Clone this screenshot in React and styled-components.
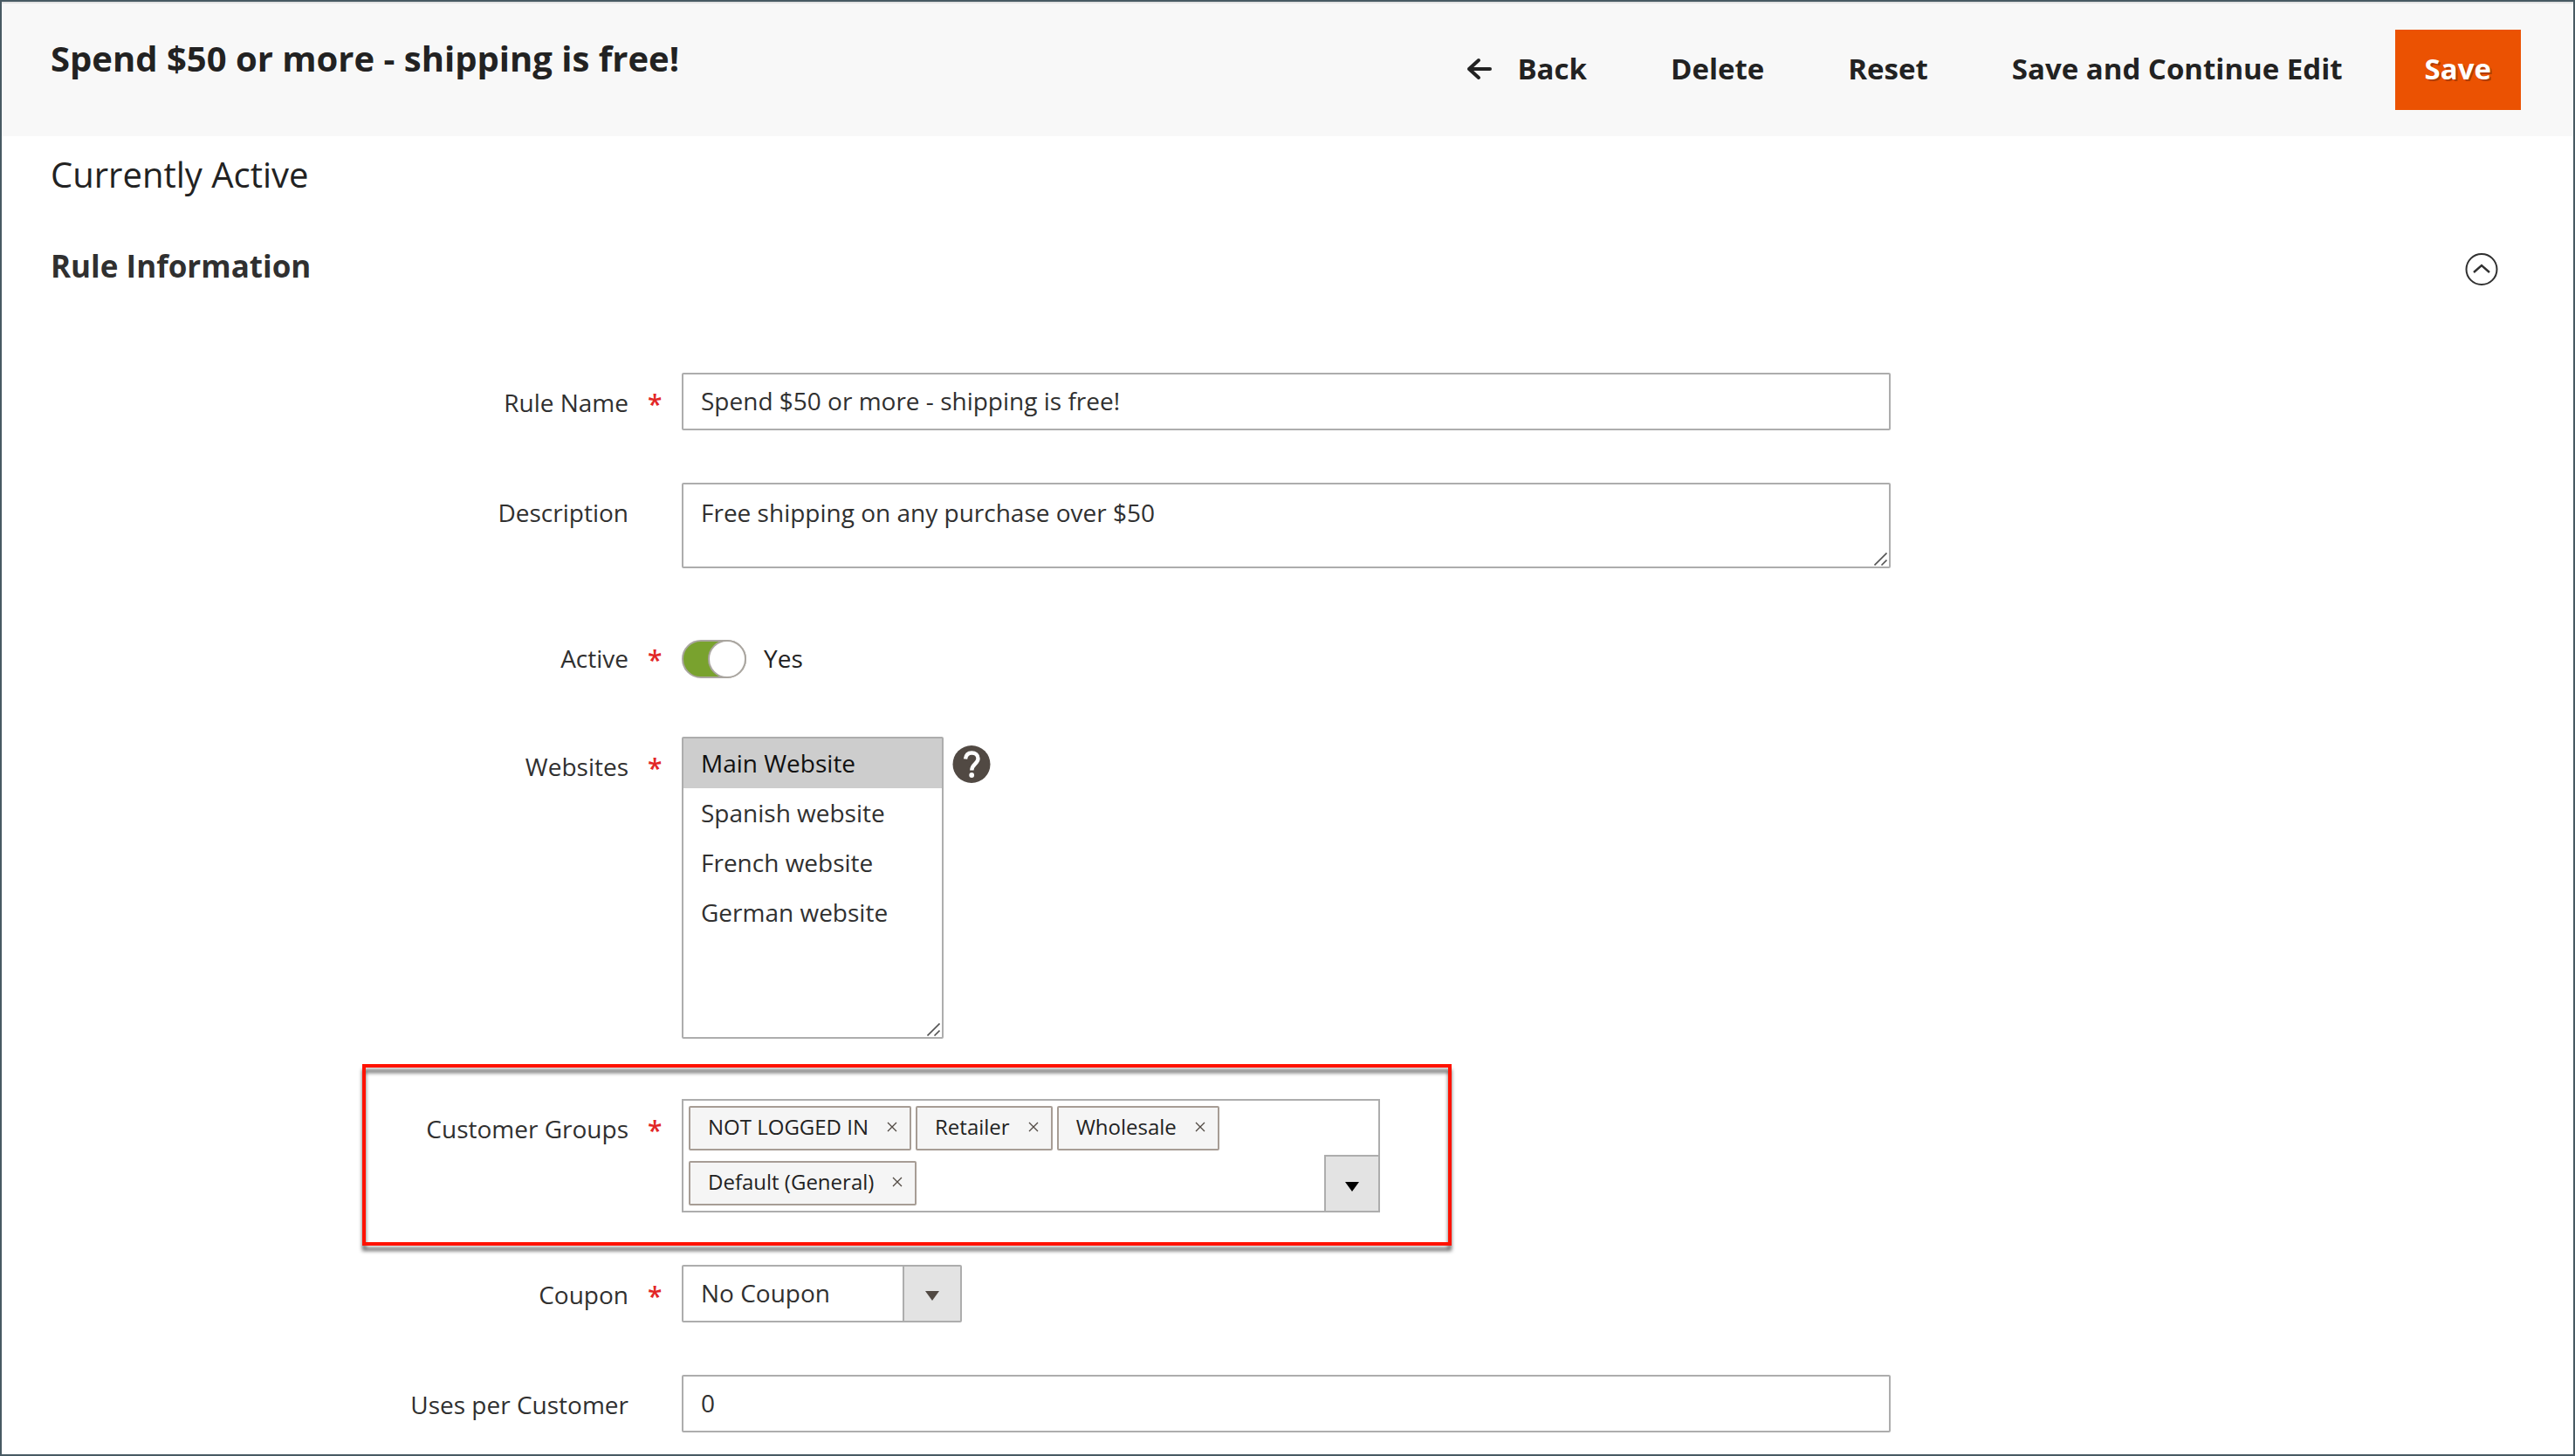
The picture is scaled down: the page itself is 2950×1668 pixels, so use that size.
import React, { useState } from "react";
import styled, { createGlobalStyle } from "styled-components";

const GlobalStyle = createGlobalStyle`
  *, *::before, *::after { box-sizing: border-box; }
  body {
    margin: 0;
    background: #fff;
    color: #303030;
    font-family: "Open Sans", "Noto Sans", sans-serif;
    font-size: 28px;
    line-height: 40px;
  }
  button, input, select, textarea { font: inherit; color: inherit; margin: 0; }
`;

const line = "#adadad";

const Page = styled.div`
  min-height: 100vh;
  border: 2px solid #485a63;
  padding-bottom: 24px;
`;

const Header = styled.header`
  display: flex;
  justify-content: space-between;
  align-items: flex-start;
  gap: 40px;
  padding: 30px 60px 30px 56px;
  border-top: 2px solid #e3e3e3;
  background: #f8f8f8;
  color: #222;
`;

const Title = styled.h1`
  margin: 6px 0 0;
  font-size: 40px;
  line-height: 54px;
  font-weight: 700;
`;

const Actions = styled.div`
  display: flex;
  align-items: stretch;
`;

const ActionButton = styled.button`
  display: flex;
  align-items: center;
  gap: 28px;
  height: 92px;
  padding: 0 48px 2px;
  border: 0;
  background: transparent;
  color: #222;
  font-size: 33px;
  font-weight: 700;
  white-space: nowrap;
  cursor: pointer;
`;

const PrimaryButton = styled(ActionButton)`
  margin-left: 12px;
  padding: 0 34px 2px;
  background: #eb5202;
  color: #fff;
  text-shadow: 2px 2px 0 rgba(0, 0, 0, 0.25);
`;

const Main = styled.main`
  padding: 17px 56px 0;
`;

const Status = styled.p`
  margin: 0 0 55px;
  font-size: 40px;
  line-height: 54px;
  color: #222;
`;

const SectionHead = styled.div`
  display: flex;
  justify-content: space-between;
  align-items: flex-end;
  padding-right: 30px;
  margin-bottom: 99px;
`;

const SectionTitle = styled.h2`
  margin: 0;
  font-size: 35px;
  line-height: 46px;
  font-weight: 700;
`;

const IconButton = styled.button`
  display: flex;
  align-items: center;
  justify-content: center;
  padding: 0;
  border: 0;
  background: transparent;
  cursor: pointer;
`;

const Form = styled.form`
  display: flex;
  flex-direction: column;
  gap: 60px;
`;

const Row = styled.div`
  display: grid;
  grid-template-columns: 723fr 1385fr 726fr;
  align-items: start;
  position: relative;
  padding-bottom: ${(p) => (p.$tall ? "9px" : "0")};
`;

const Label = styled.label`
  display: flex;
  justify-content: flex-end;
  padding-top: 14px;
`;

const Mark = styled.span`
  width: 61px;
  padding: 2px 0 0 22px;
  color: #e22626;
  font-size: 30px;
  font-weight: 600;
`;

const Field = styled.div`
  display: flex;
  align-items: flex-start;
  gap: 10px;
  min-width: 0;
`;

const TextInput = styled.input`
  width: 100%;
  height: 66px;
  padding: 0 20px 2px;
  border: 2px solid ${line};
  border-radius: 2px;
  background: #fff;
`;

const Resizable = styled.div`
  position: relative;
  display: flex;
  width: ${(p) => p.$width};
`;

const TextArea = styled.textarea`
  width: 100%;
  height: 98px;
  padding: 12px 20px;
  border: 2px solid ${line};
  border-radius: 2px;
  background: #fff;
  resize: none;
`;

const Grip = styled.svg`
  position: absolute;
  right: 4px;
  bottom: 3px;
  pointer-events: none;
`;

const MultiSelect = styled.select`
  width: 100%;
  height: 346px;
  padding: 0;
  border: 2px solid ${line};
  border-radius: 2px;
  background: #fff;
  overflow: auto;
  outline: 0;

  option {
    padding: 9px 20px 7px;
    line-height: 41px;
    min-height: 57px;
  }
  option:checked {
    background: #cdcdcd linear-gradient(#cdcdcd, #cdcdcd);
    color: #101010;
  }
`;

const Help = styled(IconButton)`
  margin-top: 10px;
`;

const ToggleField = styled.div`
  display: flex;
  align-items: flex-start;
  gap: 20px;
  height: 64px;
`;

const Toggle = styled.input`
  appearance: none;
  position: relative;
  width: 74px;
  height: 44px;
  margin-top: 13px;
  border: 2px solid #aaa6a0;
  border-radius: 22px;
  background: #fff;
  cursor: pointer;

  &::before {
    content: "";
    position: absolute;
    top: -2px;
    left: -2px;
    width: 44px;
    height: 44px;
    border: 2px solid #aaa6a0;
    border-radius: 50%;
    background: #fff;
  }
  &:checked { background: #79a22e; }
  &:checked::before { left: 28px; }
`;

const ToggleText = styled.span`
  padding-top: 14px;
  color: #222;
`;

const GroupBox = styled.div`
  display: flex;
  width: 800px;
  max-width: 100%;
  border: 2px solid ${line};
  background: #fff;
`;

const Chips = styled.div`
  flex: 1;
  display: flex;
  flex-wrap: wrap;
  gap: 12px 5px;
  padding: 6px;
`;

const Chip = styled.span`
  display: flex;
  align-items: center;
  gap: 21px;
  height: 51px;
  padding: 0 14px 3px 20px;
  border: 2px solid #a79d95;
  border-radius: 2px;
  background: #f5f5f5;
  color: #222;
  font-size: 24px;
  line-height: 36px;
`;

const DropButton = styled(IconButton)`
  align-self: flex-end;
  width: 62px;
  height: 64px;
  padding-top: 6px;
  border: solid ${line};
  border-width: 2px 0 0 2px;
  background: #e3e3e3;
`;

const Highlight = styled.div`
  position: absolute;
  top: -40px;
  left: 357px;
  width: 1248px;
  height: 208px;
  border: 4px solid #ff1200;
  filter: drop-shadow(0 6px 2px rgba(0, 0, 0, 0.6));
  pointer-events: none;
`;

const SelectBox = styled.div`
  position: relative;
  width: 321px;
`;

const Select = styled.select`
  appearance: none;
  display: block;
  width: 100%;
  height: 66px;
  padding: 0 86px 2px 20px;
  border: 2px solid ${line};
  border-radius: 2px;
  background: #fff;
`;

const SelectArrow = styled.span`
  position: absolute;
  top: 2px;
  right: 2px;
  bottom: 2px;
  width: 66px;
  display: flex;
  align-items: center;
  justify-content: center;
  padding-top: 4px;
  border-left: 2px solid ${line};
  background: #e3e3e3;
  pointer-events: none;
`;

const Caret = ({ color }) => (
  <svg width="16" height="11" viewBox="0 0 16 11" aria-hidden="true">
    <path d="M0 0h16L8 11z" fill={color} />
  </svg>
);

const ResizeGrip = () => (
  <Grip width="15" height="15" viewBox="0 0 15 15" aria-hidden="true">
    <path d="M.5 14.5l14-14M8.5 14.5l6-6" stroke="#555" strokeWidth="1.6" />
  </Grip>
);

const FieldLabel = ({ id, text, required }) => (
  <Label htmlFor={id}>
    {text}
    <Mark aria-hidden="true">{required ? "*" : ""}</Mark>
  </Label>
);

const websites = ["Main Website", "Spanish website", "French website", "German website"];

export default function App() {
  const [active, setActive] = useState(true);
  const [sites, setSites] = useState(["Main Website"]);
  const [groups, setGroups] = useState(["NOT LOGGED IN", "Retailer", "Wholesale", "Default (General)"]);

  return (
    <Page>
      <GlobalStyle />
      <Header>
        <Title>Spend $50 or more - shipping is free!</Title>
        <Actions>
          <ActionButton type="button">
            <svg width="30" height="26" viewBox="0 0 30 26" fill="none" stroke="#222" strokeWidth="4" strokeLinecap="round" strokeLinejoin="round" aria-hidden="true">
              <path d="M27 13H3M14 3L3 13l11 10" />
            </svg>
            Back
          </ActionButton>
          <ActionButton type="button">Delete</ActionButton>
          <ActionButton type="button">Reset</ActionButton>
          <ActionButton type="button">Save and Continue Edit</ActionButton>
          <PrimaryButton type="submit" form="rule-form">Save</PrimaryButton>
        </Actions>
      </Header>

      <Main>
        <Status>Currently Active</Status>
        <SectionHead>
          <SectionTitle>Rule Information</SectionTitle>
          <IconButton type="button" aria-label="Collapse section">
            <svg width="38" height="38" viewBox="0 0 38 38" fill="none" stroke="#303030" strokeWidth="2" aria-hidden="true">
              <circle cx="19" cy="18.500" r="17.500" />
              <path d="M10 22l9-8 9 8" strokeWidth="2.400" />
            </svg>
          </IconButton>
        </SectionHead>

        <Form id="rule-form" onSubmit={(e) => e.preventDefault()}>
          <Row>
            <FieldLabel id="name" text="Rule Name" required />
            <Field>
              <TextInput id="name" type="text" defaultValue="Spend $50 or more - shipping is free!" />
            </Field>
          </Row>

          <Row $tall>
            <FieldLabel id="description" text="Description" />
            <Field>
              <Resizable $width="100%">
                <TextArea id="description" defaultValue="Free shipping on any purchase over $50" />
                <ResizeGrip />
              </Resizable>
            </Field>
          </Row>

          <Row>
            <FieldLabel id="active" text="Active" required />
            <ToggleField>
              <Toggle id="active" type="checkbox" checked={active} onChange={(e) => setActive(e.target.checked)} />
              <ToggleText>{active ? "Yes" : "No"}</ToggleText>
            </ToggleField>
          </Row>

          <Row $tall>
            <FieldLabel id="websites" text="Websites" required />
            <Field>
              <Resizable $width="300px">
                <MultiSelect
                  id="websites"
                  multiple
                  size={6}
                  value={sites}
                  onChange={(e) => setSites(Array.from(e.target.selectedOptions, (o) => o.value))}
                >
                  {websites.map((w) => (
                    <option key={w} value={w}>{w}</option>
                  ))}
                </MultiSelect>
                <ResizeGrip />
              </Resizable>
              <Help type="button" aria-label="Help">
                <svg width="44" height="44" viewBox="0 0 44 44" aria-hidden="true">
                  <circle cx="22" cy="21.500" r="21.500" fill="#514943" />
                  <path d="M15 15.500c.6-4.500 3-7 7.200-7 4.200 0 7.300 2.500 7.300 6.500 0 6-7.200 6.500-7.200 13.500" fill="none" stroke="#fff" strokeWidth="4.400" />
                  <circle cx="22.200" cy="34" r="2.900" fill="#fff" />
                </svg>
              </Help>
            </Field>
          </Row>

          <Row>
            <FieldLabel id="groups" text="Customer Groups" required />
            <Field>
              <GroupBox>
                <Chips>
                  {groups.map((g) => (
                    <Chip key={g}>
                      {g}
                      <IconButton type="button" aria-label={`Remove ${g}`} onClick={() => setGroups(groups.filter((x) => x !== g))}>
                        <svg width="12" height="12" viewBox="0 0 12 12" stroke="#514943" strokeWidth="1.300" aria-hidden="true">
                          <path d="M1 1l10 10M11 1L1 11" />
                        </svg>
                      </IconButton>
                    </Chip>
                  ))}
                </Chips>
                <DropButton id="groups" type="button" aria-label="Choose customer groups">
                  <Caret color="#000" />
                </DropButton>
              </GroupBox>
            </Field>
            <Highlight />
          </Row>

          <Row>
            <FieldLabel id="coupon" text="Coupon" required />
            <Field>
              <SelectBox>
                <Select id="coupon" defaultValue="none">
                  <option value="none">No Coupon</option>
                </Select>
                <SelectArrow><Caret color="#514943" /></SelectArrow>
              </SelectBox>
            </Field>
          </Row>

          <Row>
            <FieldLabel id="uses" text="Uses per Customer" />
            <Field>
              <TextInput id="uses" type="text" defaultValue="0" />
            </Field>
          </Row>
        </Form>
      </Main>
    </Page>
  );
}
